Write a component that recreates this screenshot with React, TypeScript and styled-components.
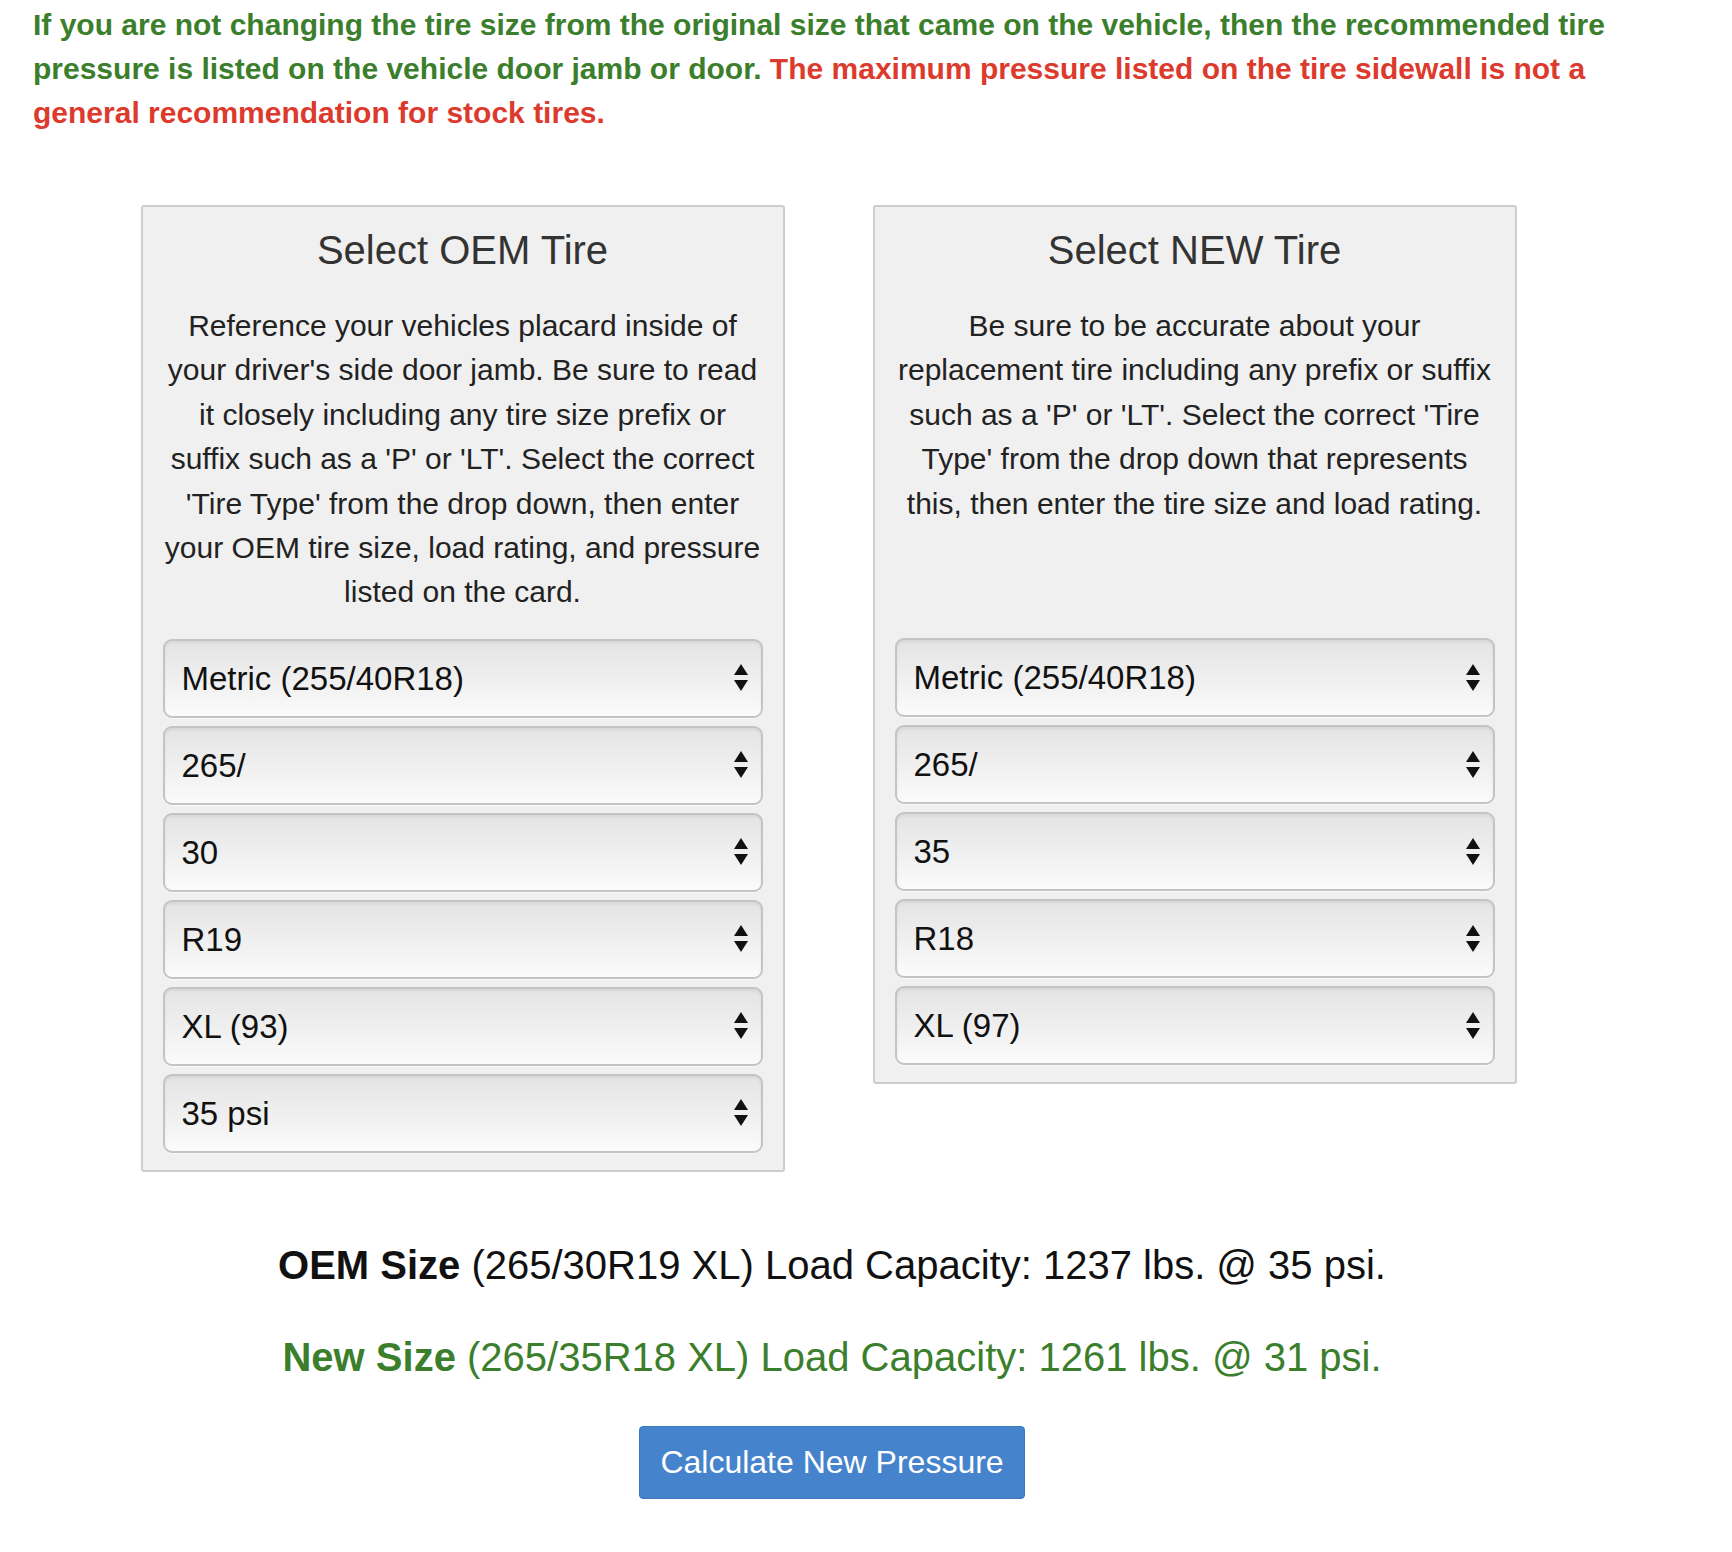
import styled, { createGlobalStyle } from 'styled-components'

const GlobalStyle = createGlobalStyle`
    body {
        margin: 0;
        background: #ffffff;
        font-family: "Liberation Sans", Arial, Helvetica, sans-serif;
    }
`

interface TireSelectProps {
    value: string
}

interface InfoProps {
    $tone?: 'plain' | 'green'
}

const oemOptions = ['Metric (255/40R18)', '265/', '30', 'R19', 'XL (93)', '35 psi']
const newOptions = ['Metric (255/40R18)', '265/', '35', 'R18', 'XL (97)']

const Arrows = () => (
    <svg width="16" height="30" viewBox="0 0 16 30">
        <path d="M8 1 L15 12 L1 12 Z" fill="#111" />
        <path d="M1 17 L15 17 L8 28 Z" fill="#111" />
    </svg>
)

const TireSelect = ({ value }: TireSelectProps) => (
    <SelectWrap>
        <Select defaultValue={value}>
            <option value={value}>{value}</option>
        </Select>
        <ArrowBox>
            <Arrows />
        </ArrowBox>
    </SelectWrap>
)

const App = () => {
    return (
        <>
            <GlobalStyle />
            <Page>
                <Notice>
                    If you are not changing the tire size from the original size that came on the vehicle, then the
                    recommended tire pressure is listed on the vehicle door jamb or door.{' '}
                    <Warning>The maximum pressure listed on the tire sidewall is not a general recommendation for stock tires.</Warning>
                </Notice>

                <Panels>
                    {/*OEM tire*/}
                    <Panel>
                        <PanelTitle>Select OEM Tire</PanelTitle>
                        <PanelText>
                            Reference your vehicles placard inside of your driver's side door jamb. Be sure to read it
                            closely including any tire size prefix or suffix such as a 'P' or 'LT'. Select the correct
                            'Tire Type' from the drop down, then enter your OEM tire size, load rating, and pressure
                            listed on the card.
                        </PanelText>
                        <SelectList>
                            {oemOptions.map((o, i) => <TireSelect key={i} value={o} />)}
                        </SelectList>
                    </Panel>
                    {/*New tire*/}
                    <Panel>
                        <PanelTitle>Select NEW Tire</PanelTitle>
                        <PanelText>
                            Be sure to be accurate about your replacement tire including any prefix or suffix such as
                            a 'P' or 'LT'. Select the correct 'Tire Type' from the drop down that represents this, then
                            enter the tire size and load rating.
                        </PanelText>
                        <SelectList>
                            {newOptions.map((o, i) => <TireSelect key={i} value={o} />)}
                        </SelectList>
                    </Panel>
                </Panels>

                <Result>
                    <Info>
                        <b>OEM Size</b> (265/30R19 XL) Load Capacity: 1237 lbs. @ 35 psi.
                    </Info>
                    <Info $tone="green">
                        <b>New Size</b> (265/35R18 XL) Load Capacity: 1261 lbs. @ 31 psi.
                    </Info>
                    <CalcButton type="button">Calculate New Pressure</CalcButton>
                </Result>
            </Page>
        </>
    )
}

export default App

const Page = styled.div`
    width: 1598px;
    margin-left: 33px;
    padding-bottom: 46px;
`

const Notice = styled.p`
    margin: 0;
    padding-top: 3px;
    font-size: 30px;
    line-height: 44px;
    font-weight: 700;
    color: #3b7e2c;
`

const Warning = styled.span`
    color: #dd3a2e;
`

const Panels = styled.div`
    display: flex;
    justify-content: center;
    align-items: flex-start;
    gap: 88px;
    margin-top: 70px;
    padding-right: 7px;
`

const Panel = styled.div`
    width: 644px;
    box-sizing: border-box;
    background: #f0f0f0;
    border: 2px solid #cdcdcd;
    border-radius: 3px;
    padding: 0 20px 17px;
`

const PanelTitle = styled.h3`
    margin: 18px 0 0;
    text-align: center;
    font-size: 40px;
    line-height: 50px;
    font-weight: 400;
    color: #333;
`

const PanelText = styled.p`
    margin: 29px 0 0;
    min-height: 310px;
    text-align: center;
    font-size: 30px;
    line-height: 44.4px;
    color: #222;
`

const SelectList = styled.div`
    display: flex;
    flex-direction: column;
    gap: 8px;
    margin-top: 24px;
`

const SelectWrap = styled.div`
    position: relative;
`

const Select = styled.select`
    display: block;
    width: 100%;
    height: 79px;
    box-sizing: border-box;
    appearance: none;
    -webkit-appearance: none;
    padding: 0 60px 0 17px;
    font-family: "Liberation Sans", Arial, sans-serif;
    font-size: 33px;
    color: #111;
    border: 2px solid #c4c4c4;
    border-radius: 9px;
    background: linear-gradient(to bottom, #e4e4e4 0%, #efefef 50%, #fbfbfb 100%);
    box-shadow: inset 0 2px 3px rgba(0, 0, 0, 0.06), 0 1px 0 rgba(255, 255, 255, 0.6);
    outline: none;
`

const ArrowBox = styled.span`
    position: absolute;
    top: 50%;
    right: 14px;
    transform: translateY(-50%);
    display: flex;
    pointer-events: none;
`

const Result = styled.div`
    display: flex;
    flex-direction: column;
    align-items: center;
    margin-top: 70px;
`

const Info = styled.p<InfoProps>`
    margin: 0 0 46px;
    font-size: 40px;
    line-height: 46px;
    color: ${props => props.$tone === 'green' ? '#3b7e2c' : '#111'};
    b {
        font-weight: 700;
    }
`

const CalcButton = styled.button`
    margin-top: 0;
    padding: 0 20px;
    height: 73px;
    font-family: "Liberation Sans", Arial, sans-serif;
    font-size: 32px;
    color: #fff;
    background: #4683cd;
    border: 1px solid #3f78be;
    border-radius: 4px;
    cursor: pointer;
`
